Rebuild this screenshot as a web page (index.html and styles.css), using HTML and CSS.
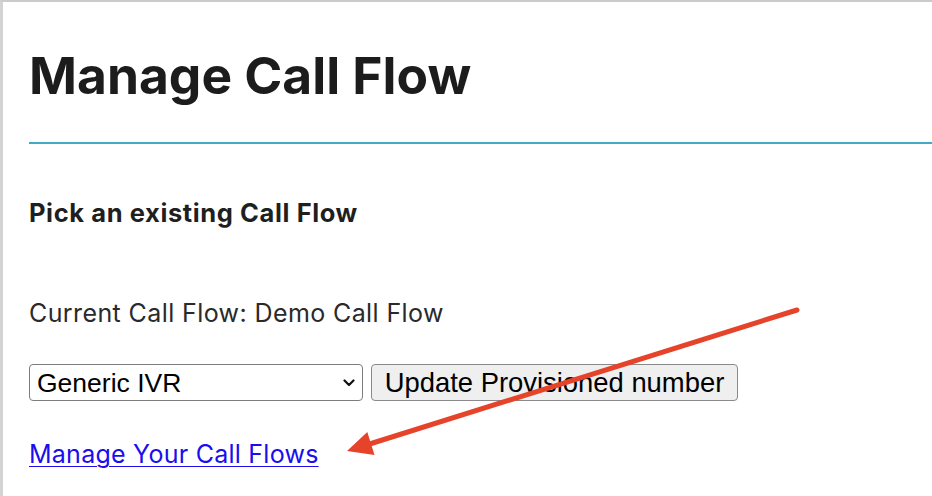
FILE: index.html
```html
<!DOCTYPE html>
<html lang="en">
<head>
<meta charset="utf-8">
<title>Manage Call Flow</title>
<link rel="stylesheet" href="styles.css">
</head>
<body>
<div class="page">
  <h1 class="title">Manage Call Flow</h1>
  <hr class="rule">
  <h2 class="subtitle">Pick an existing Call Flow</h2>
  <p class="current">Current Call Flow: Demo Call Flow</p>
  <form class="row">
    <div class="select-wrap">
      <select class="select">
        <option>Generic IVR</option>
        <option>Demo Call Flow</option>
      </select>
      <svg class="chevron" width="12" height="8" viewBox="0 0 12 8"><path d="M1.5 1.5 L6 6 L10.5 1.5" fill="none" stroke="#111" stroke-width="2.2" stroke-linecap="round" stroke-linejoin="round"/></svg>
    </div>
    <button type="button" class="btn">Update Provisioned number</button>
  </form>
  <a class="link" href="#">Manage Your Call Flows</a>
  <svg class="arrow" width="932" height="496" viewBox="0 0 932 496">
    <line x1="797" y1="310" x2="368" y2="444.5" stroke="#e6432b" stroke-width="5" stroke-linecap="round"/>
    <polygon points="347,451 367.3,432.1 374.5,454.9" fill="#e6432b"/>
  </svg>
</div>
</body>
</html>
```

FILE: styles.css
```css
html, body {
  margin: 0;
  padding: 0;
  background: #fff;
}

.page {
  position: relative;
  box-sizing: border-box;
  width: 932px;
  height: 496px;
  overflow: hidden;
  border-top: 2px solid #cbcbcb;
  border-left: 3px solid #d3d3d3;
  padding-left: 26px;
  display: flex;
  flex-direction: column;
  align-items: flex-start;
  font-family: Inter, "Liberation Sans", sans-serif;
  color: #1f1f1f;
}

.title {
  margin: 43px 0 0;
  font-size: 51.5px;
  line-height: 60px;
  font-weight: 700;
  color: #1c1c1c;
}

.rule {
  align-self: stretch;
  margin: 37px 0 0;
  border: 0;
  height: 2px;
  background: #3eacc3;
}

.subtitle {
  margin: 54px 0 0;
  font-size: 25.5px;
  line-height: 30px;
  font-weight: 700;
  letter-spacing: 0.6px;
}

.current {
  margin: 70px 0 0;
  font-size: 25px;
  line-height: 30px;
  font-weight: 400;
  letter-spacing: 0.4px;
  color: #2a2a2a;
}

.row {
  margin: 36px 0 0;
  display: flex;
  gap: 8px;
  height: 37px;
}

.select-wrap {
  position: relative;
  width: 334px;
  height: 37px;
}

.select {
  appearance: none;
  -webkit-appearance: none;
  box-sizing: border-box;
  width: 100%;
  height: 100%;
  margin: 0;
  border: 1px solid #7d7d7d;
  border-radius: 4px;
  background: #fff;
  padding: 0 0 0 7px;
  font-family: "Liberation Sans", Arial, sans-serif;
  font-size: 26.5px;
  color: #000;
}

.chevron {
  position: absolute;
  right: 8px;
  top: 15px;
  pointer-events: none;
}

.btn {
  box-sizing: border-box;
  height: 37px;
  width: 367px;
  margin: 0;
  border: 1px solid #8a8a8a;
  border-radius: 4px;
  background: #efefef;
  padding: 0 12px;
  font-family: "Liberation Sans", Arial, sans-serif;
  font-size: 27.4px;
  color: #000;
}

.link {
  margin: 38px 0 0;
  font-size: 25px;
  line-height: 30px;
  letter-spacing: 0.25px;
  color: #1a0dee;
  text-decoration: underline;
  text-underline-offset: 3px;
  text-decoration-thickness: 1px;
}

.arrow {
  position: absolute;
  left: -3px;
  top: -2px;
  pointer-events: none;
}
```
